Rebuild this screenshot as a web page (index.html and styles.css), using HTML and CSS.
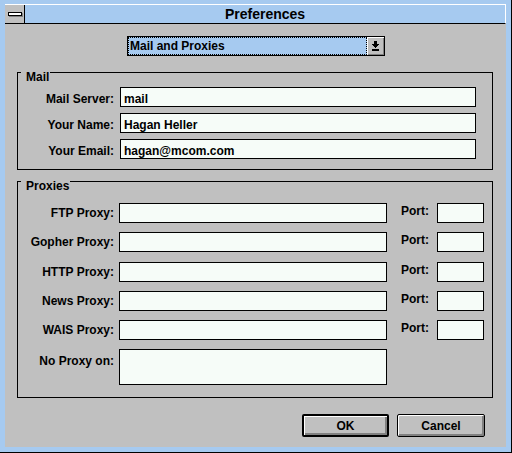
FILE: index.html
```html
<!DOCTYPE html>
<html>
<head>
<meta charset="utf-8">
<title>Preferences</title>
<link rel="stylesheet" href="styles.css">
</head>
<body>
<div class="window">
  <div class="titlebar">
    <div class="sysmenu"><span class="sysbar"></span></div>
    <div class="title">Preferences</div>
  </div>
  <div class="client">
    <div class="select">
      <div class="select-value">Mail and Proxies</div>
      <div class="select-btn">
        <svg width="7" height="10" viewBox="0 0 7 10" shape-rendering="crispEdges">
          <rect x="2" y="0" width="3" height="3" fill="#000"/>
          <rect x="0" y="3" width="7" height="1" fill="#000"/>
          <rect x="1" y="4" width="5" height="1" fill="#000"/>
          <rect x="2" y="5" width="3" height="1" fill="#000"/>
          <rect x="3" y="6" width="1" height="1" fill="#000"/>
          <rect x="0" y="8" width="7" height="2" fill="#000"/>
        </svg>
      </div>
    </div>

    <div class="group group-mail">
      <span class="group-title">Mail</span>
      <div class="mail-grid">
        <label class="lbl lbl-mail">Mail Server:</label><input class="field" value="mail">
        <label class="lbl lbl-mail">Your Name:</label><input class="field" value="Hagan Heller">
        <label class="lbl lbl-mail">Your Email:</label><input class="field" value="hagan@mcom.com">
      </div>
    </div>

    <div class="group group-proxies">
      <span class="group-title">Proxies</span>
      <div class="proxy-grid">
        <label class="lbl lbl-proxy">FTP Proxy:</label><input class="field"><label class="port-lbl">Port:</label><input class="field">
        <label class="lbl lbl-proxy">Gopher Proxy:</label><input class="field"><label class="port-lbl">Port:</label><input class="field">
        <label class="lbl lbl-proxy">HTTP Proxy:</label><input class="field"><label class="port-lbl">Port:</label><input class="field">
        <label class="lbl lbl-proxy">News Proxy:</label><input class="field"><label class="port-lbl">Port:</label><input class="field">
        <label class="lbl lbl-proxy">WAIS Proxy:</label><input class="field"><label class="port-lbl">Port:</label><input class="field">
        <label class="lbl lbl-noproxy">No Proxy on:</label><textarea class="field area"></textarea>
      </div>
    </div>

    <div class="buttons">
      <button class="btn btn-default">OK</button>
      <button class="btn">Cancel</button>
    </div>
  </div>
</div>
</body>
</html>
```
FILE: styles.css
```css
* { box-sizing: border-box; }

html, body { margin: 0; padding: 0; }

body {
  width: 512px;
  height: 453px;
  overflow: hidden;
  background: #000;
  color: #000;
  font: bold 12px "Liberation Sans", Arial, sans-serif;
}

.window {
  width: 512px;
  height: 453px;
  display: flex;
  flex-direction: column;
  background: #a6caf0;
  border-right: 1px solid #000;
  border-bottom: 1px solid #000;
  padding: 4px 5px 5px 5px;
}

.titlebar {
  height: 20px;
  display: flex;
  background: #a6caf0;
  border-top: 1px solid #fff;
  border-right: 1px solid #fff;
  border-bottom: 1px solid #000;
}

.sysmenu {
  width: 20px;
  background: #c0c0c0;
  border-right: 1px solid #000;
  display: flex;
  align-items: center;
  padding-left: 3px;
}

.sysbar {
  width: 14px;
  height: 4px;
  background: #fff;
  border: 1px solid #000;
  box-shadow: 1px 1px 0 #808080;
}

.title {
  flex: 1;
  text-align: center;
  font-size: 14px;
  line-height: 18px;
}

.client {
  flex: 1;
  display: flex;
  flex-direction: column;
  background: #c0c0c0;
  padding: 12px 13px 10px 12px;
}

.select {
  align-self: flex-start;
  margin-left: 110px;
  width: 258px;
  height: 20px;
  display: flex;
  border: 1px solid #000;
}

.select-value {
  flex: 1;
  background: #a6caf0;
  border: 1px dotted #000;
  padding-left: 1px;
  line-height: 16px;
  white-space: nowrap;
}

.select-btn {
  width: 17px;
  background: #c0c0c0;
  box-shadow: inset 1px 1px 0 #fff, inset -1px -1px 0 #808080;
  display: flex;
  align-items: center;
  justify-content: center;
}

.select-btn svg { display: block; }

.group {
  position: relative;
  border: 1px solid #000;
}

.group-title {
  position: absolute;
  top: -3px;
  left: 3px;
  padding: 0 1px 0 5px;
  line-height: 14px;
  background: #c0c0c0;
}

.group-mail {
  margin-top: 16px;
  padding: 14px 16px 10px 0;
}

.group-proxies {
  margin-top: 11px;
  padding: 21px 8px 11.75px 0;
}

.mail-grid {
  display: grid;
  grid-template-columns: 102px 356px;
  row-gap: 6px;
}

.proxy-grid {
  display: grid;
  grid-template-columns: 101px 268px 50px 47px;
  row-gap: 9.25px;
}

.lbl {
  text-align: right;
  white-space: nowrap;
}

.lbl-mail {
  padding-right: 6px;
  align-self: end;
  line-height: 16px;
}

.lbl-proxy {
  padding-right: 5px;
  align-self: center;
  line-height: 20px;
}

.lbl-noproxy {
  padding-right: 5px;
  align-self: start;
  line-height: 24px;
}

.port-lbl {
  padding-left: 14px;
  align-self: start;
  line-height: 16px;
}

.field {
  display: block;
  width: 100%;
  height: 20px;
  margin: 0;
  border: 1px solid #000;
  border-radius: 0;
  background: #f6fcf8;
  color: #000;
  font: bold 12px "Liberation Sans", Arial, sans-serif;
  line-height: 15px;
  padding: 3px 3px 0 3px;
  outline: none;
}

.area {
  height: 36px;
  resize: none;
  overflow: hidden;
}

.buttons {
  margin-top: 16px;
  display: flex;
  justify-content: flex-end;
  gap: 8px;
  padding-right: 8px;
}

.btn {
  width: 88px;
  height: 23px;
  margin: 0;
  padding: 0;
  background: #c0c0c0;
  color: #000;
  font: bold 12px "Liberation Sans", Arial, sans-serif;
  border: 1px solid #000;
  border-radius: 2px;
  box-shadow: inset 1px 1px 0 #fff, inset -2px -2px 0 #808080;
}

.btn-default {
  width: 87px;
  border-width: 2px;
}
```
